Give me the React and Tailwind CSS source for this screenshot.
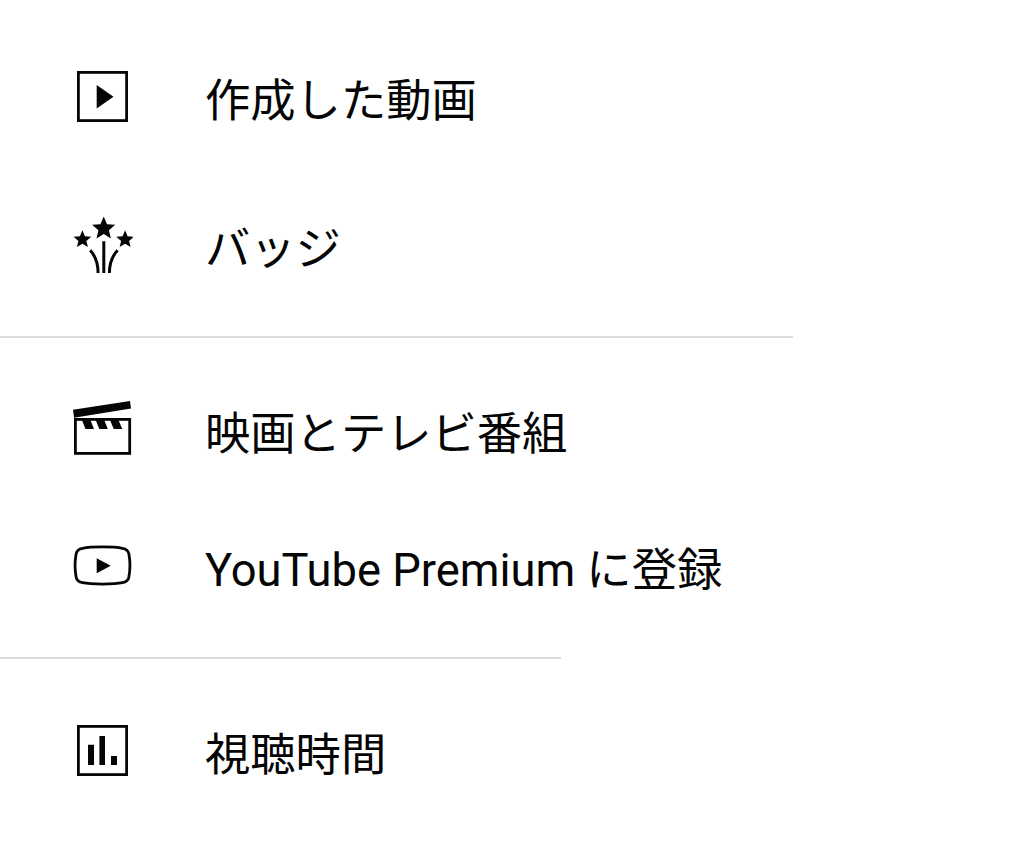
const STAR = 'M0 -1L.27 -.36L.951 -.309L.43 .14L.588 .809L0 .45L-.588 .809L-.43 .14L-.951 -.309L-.27 -.36Z';

const Icon = ({ children }) => (
  <svg viewBox="0 0 60 60" className="h-[60px] w-[60px] shrink-0" fill="currentColor" aria-hidden="true">
    {children}
  </svg>
);

const VideosIcon = () => (
  <Icon>
    <rect x="5.4" y="5.4" width="48.2" height="48.2" fill="none" stroke="currentColor" strokeWidth="2.8" />
    <path d="M23.7 18L40.5 29.7L23.7 41.4Z" />
  </Icon>
);

const BadgesIcon = () => (
  <Icon>
    <path d={STAR} transform="translate(30.7 13.6) scale(12.2)" />
    <path d={STAR} transform="translate(9.4 24.6) scale(9.3)" />
    <path d={STAR} transform="translate(52.1 24.6) scale(9.3)" />
    <path
      d="M30.8 26.3V58M17.2 35.2C22 40.5 25 48 25.1 58M44.6 35.2C39.6 40.5 36.5 48 36.4 58"
      fill="none"
      stroke="currentColor"
      strokeWidth="3"
    />
  </Icon>
);

const MoviesIcon = () => (
  <Icon>
    <path d="M0 11.7L57 3L58 10.4L1 19.7Z" />
    <rect x="2.4" y="21.4" width="54.3" height="34" fill="none" stroke="currentColor" strokeWidth="2.8" />
    <path d="M8.5 21H17L21 31H12.5ZM22.3 21H30.8L34.8 31H26.3ZM36.6 21H45.1L49.2 31H40.7Z" />
  </Icon>
);

const PremiumIcon = () => (
  <Icon>
    <path
      d="M9.5 12.3C18 10.5 41 10.5 49.5 12.3C53.5 13 55.3 14.7 55.9 18C57 24 57 35 55.9 41C55.3 44.3 53.5 46 49.5 46.7C41 48.5 18 48.5 9.5 46.7C5.5 46 3.7 44.3 3.1 41C2 35 2 24 3.1 18C3.7 14.7 5.5 13 9.5 12.3Z"
      fill="none"
      stroke="currentColor"
      strokeWidth="2.8"
    />
    <path d="M23.7 22.2L37.7 29.7L23.7 37.3Z" />
  </Icon>
);

const TimeWatchedIcon = () => (
  <Icon>
    <rect x="5.4" y="5.4" width="48.2" height="48.2" fill="none" stroke="currentColor" strokeWidth="2.8" />
    <path d="M15 23.8H21V44H15ZM26.4 15H32V44H26.4ZM38 35H44V44H38Z" />
  </Icon>
);

const MenuItem = ({ icon: ItemIcon, label, className, labelClassName = 'pt-[9px]' }) => (
  <li className={`flex items-center gap-[72px] ${className}`}>
    <ItemIcon />
    <span className={`text-[45.3px] leading-[60px] whitespace-nowrap ${labelClassName}`}>{label}</span>
  </li>
);

const App = () => {
  return (
    <nav className="h-[850px] w-[1024px] overflow-hidden bg-white pt-[23px] font-['Roboto','Noto_Sans_CJK_JP',sans-serif] text-[#050505]" lang="ja">
      <ul className="pb-[17px] pl-[73px]">
        <MenuItem icon={VideosIcon} label="作成した動画" className="h-[148px]" />
        <MenuItem icon={BadgesIcon} label="バッジ" className="h-[148px]" />
      </ul>
      <hr className="h-[2px] w-[793px] border-0 bg-[#dcdcdc]" />
      <ul className="pt-[21px] pb-[22px] pl-[73px]">
        <MenuItem icon={MoviesIcon} label="映画とテレビ番組" className="h-[138px]" labelClassName="pt-[13px]" />
        <MenuItem icon={PremiumIcon} label="YouTube Premium に登録" className="h-[138px]" />
      </ul>
      <hr className="h-[2px] w-[561px] border-0 bg-[#dcdcdc]" />
      <ul className="pt-[23px] pl-[73px]">
        <MenuItem icon={TimeWatchedIcon} label="視聴時間" className="h-[138px]" />
      </ul>
    </nav>
  );
};

export default App;
